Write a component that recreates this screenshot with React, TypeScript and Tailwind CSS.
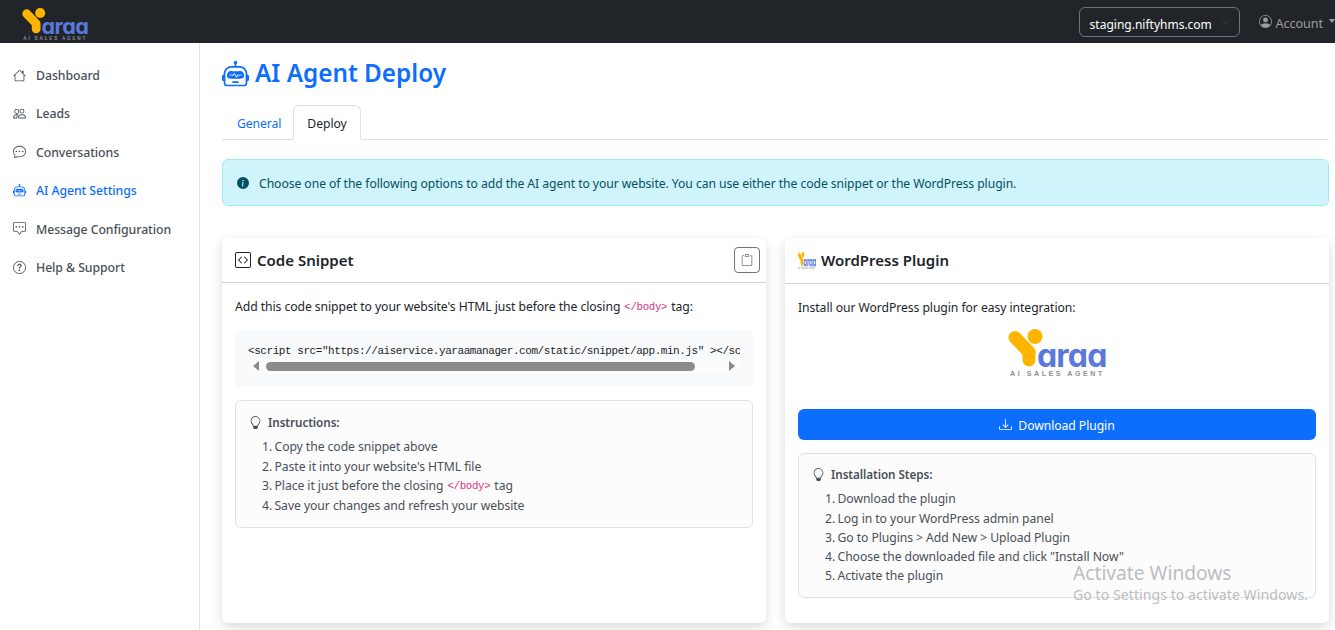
import React from "react";
import { BsHouse, BsPeople, BsChatDots, BsChatSquareDots, BsQuestionCircle, BsRobot, BsInfoCircleFill, BsCodeSquare, BsClipboard, BsLightbulb, BsDownload, BsPersonCircle, BsChevronDown } from "react-icons/bs";

function Logo({ className, stretch }: { className: string; stretch?: boolean }) {
  return (
    <svg viewBox="0 0 98 49" className={className} preserveAspectRatio={stretch ? "none" : "xMidYMid meet"}>
      <path d="M7 8.5 L21 23 V31" fill="none" stroke="#ffb400" strokeWidth="13" strokeLinecap="round" strokeLinejoin="round" />
      <circle cx="27" cy="7.5" r="7.5" fill="#ffb400" />
      <text x="29" y="38" fontFamily="Inter, sans-serif" fontWeight="700" fontSize="32" letterSpacing="-0.8" fill="#5b78dc" className="[font-feature-settings:'cv11']">araa</text>
      <text x="2" y="47" fontFamily="'Liberation Sans', sans-serif" fontWeight="700" fontSize="7" letterSpacing="2.6" fill="#8a8f96">AI SALES AGENT</text>
    </svg>
  );
}

function NavItem({ icon, label, active }: { icon: React.ReactNode; label: string; active?: boolean }) {
  return (
    <div className={`flex h-[38.4px] items-center pl-[13px] ${active ? "text-[#0d6efd]" : "text-[#495057]"}`}>
      <span className="flex w-[23px] items-center text-[13px]">{icon}</span>
      <span className="mt-[2px] text-[12.3px] font-medium tracking-[-0.07px]">{label}</span>
    </div>
  );
}

function CodeTag() {
  return <code className="font-['Liberation_Mono',monospace] text-[10.8px] tracking-[-0.35px] text-[#d63384]">&lt;/body&gt;</code>;
}

function Row({ n, children, h }: { n: number; children: React.ReactNode; h?: string }) {
  return (
    <li className={`flex items-center ${h ?? "h-[19.2px]"}`}>
      <span className="w-[12.5px]">{n}.</span>
      <span>{children}</span>
    </li>
  );
}

export default function App() {
  return (
    <div className="h-[630px] w-[1335px] overflow-hidden bg-white font-['Noto_Sans','Open_Sans',sans-serif] text-[12.2px] tracking-[-0.07px] text-[#212529] relative">
      <header className="flex h-[43px] items-center bg-[#212529] pl-[22px] pr-0">
        <Logo className="mt-[5px] h-[33px] w-[66px]" />
        <div className="ml-auto flex h-[30px] w-[161px] items-center rounded-[6px] border border-[#6c757d] pl-[10px] text-[12px] tracking-normal text-white">
          <span className="mt-[6px]">staging.niftyhms.com</span>
          <BsChevronDown className="ml-[9px] text-[10px] text-[#40464c]" />
        </div>
        <div className="ml-[19px] flex items-center text-[12.6px] text-[#9a9da0]">
          <BsPersonCircle className="mr-[4px] text-[13px]" />
          <span className="mt-[5px]">Account</span>
          <span className="ml-[6px] h-0 w-0 border-x-[3.5px] border-t-[4px] border-x-transparent border-t-[#9a9da0]" />
        </div>
      </header>
      <div className="flex h-[587px]">
        <aside className="w-[200px] shrink-0 border-r border-[#dee2e6] pt-[13px]">
          <NavItem icon={<BsHouse />} label="Dashboard" />
          <NavItem icon={<BsPeople />} label="Leads" />
          <NavItem icon={<BsChatDots />} label="Conversations" />
          <NavItem icon={<BsRobot />} label="AI Agent Settings" active />
          <NavItem icon={<BsChatSquareDots />} label="Message Configuration" />
          <NavItem icon={<BsQuestionCircle />} label="Help & Support" />
        </aside>
        <main className="min-w-0 flex-1 pl-[22px] pr-[6px]">
          <h1 className="flex h-[62px] items-center gap-[6px] text-[24.3px] font-semibold tracking-normal text-[#0d6efd]">
            <BsRobot className="text-[27px]" />
            <span className="mb-[2px]">AI Agent Deploy</span>
          </h1>
          <div className="flex h-[35px] border-b border-[#dee2e6]">
            <div className="flex h-[34px] w-[71px] items-center pl-[15px] text-[#0d6efd]"><span className="mt-[5px]">General</span></div>
            <div className="flex h-[35px] w-[68px] items-center justify-center rounded-t-[6px] border border-b-white border-[#dee2e6] bg-white text-[#212529]"><span className="mt-[3px]">Deploy</span></div>
          </div>
          <div className="mt-[19px] flex h-[47px] items-center gap-[10px] rounded-[6px] border border-[#9eeaf9] bg-[#cff4fc] pl-[14px] text-[#055160]">
            <BsInfoCircleFill className="text-[12px]" />
            <span className="mt-[3px]">Choose one of the following options to add the AI agent to your website. You can use either the code snippet or the WordPress plugin.</span>
          </div>
          <div className="mt-[32px] grid h-[385px] grid-cols-[544px_544px] gap-[19px]">
            <section className="flex flex-col rounded-[6px] bg-white shadow-[0_4px_12px_rgba(0,0,0,0.15)]">
              <div className="flex h-[45px] items-center border-b border-[#d3d4d5] pl-[13px] pr-[6px]">
                <BsCodeSquare className="mr-[6px] text-[16px] text-[#212529]" />
                <span className="text-[15px] font-semibold tracking-normal">Code Snippet</span>
                <div className="ml-auto flex h-[26px] w-[26px] items-center justify-center rounded-[4px] border border-[#6c757d] text-[#6c757d]">
                  <BsClipboard className="text-[12px]" />
                </div>
              </div>
              <div className="px-[13px]">
                <p className="mt-[15px] flex h-[19px] items-center gap-[4px]">
                  Add this code snippet to your website's HTML just before the closing <CodeTag /> tag:
                </p>
                <div className="mt-[13px] h-[57px] rounded-[6px] bg-[#f8f9fa] px-[13px] pt-[13px]">
                  <div className="h-[16px] overflow-hidden whitespace-nowrap pt-[1px] font-['Liberation_Mono',monospace] text-[11px] leading-[15px] tracking-[-0.44px]">
                    &lt;script src="https://aiservice.yaraamanager.com/static/snippet/app.min.js" &gt;&lt;/sc
                  </div>
                  <div className="flex h-[14px] items-center justify-between bg-[#fbfbfc] px-[5px]">
                    <span className="h-0 w-0 border-y-[5px] border-r-[6px] border-y-transparent border-r-[#8b8b8b]" />
                    <span className="ml-[7px] mr-[34px] h-[9px] flex-1 rounded-full bg-[#8b8b8b]" />
                    <span className="h-0 w-0 border-y-[5px] border-l-[6px] border-y-transparent border-l-[#8b8b8b]" />
                  </div>
                </div>
                <div className="mt-[13px] h-[128px] rounded-[6px] border border-[#dee2e6] bg-[#fcfcfd] px-[13px] pt-[12px]">
                  <div className="flex h-[19px] items-center text-[11.7px] font-semibold text-[#495057]">
                    <BsLightbulb className="mr-[6px] text-[13px]" />
                    <span className="mt-[1px]">Instructions:</span>
                  </div>
                  <ol className="ml-[13px] mt-[6px] text-[#495057]">
                    <Row n={1}>Copy the code snippet above</Row>
                    <Row n={2}>Paste it into your website's HTML file</Row>
                    <Row n={3}><span className="flex items-center gap-[4px]">Place it just before the closing <CodeTag /> tag</span></Row>
                    <Row n={4} h="h-[21px]">Save your changes and refresh your website</Row>
                  </ol>
                </div>
              </div>
            </section>
            <section className="flex flex-col rounded-[6px] bg-white shadow-[0_4px_12px_rgba(0,0,0,0.15)]">
              <div className="flex h-[46px] items-center border-b border-[#d3d4d5] pl-[13px]">
                <Logo className="mr-[5px] h-[18px] w-[18px]" stretch />
                <span className="text-[15px] font-semibold tracking-normal">WordPress Plugin</span>
              </div>
              <div className="px-[13px]">
                <p className="mt-[15px] flex h-[19px] items-center">Install our WordPress plugin for easy integration:</p>
                <div className="mt-[11px] flex h-[49px] justify-center">
                  <Logo className="h-[49px] w-[98px]" />
                </div>
                <div className="mt-[31px] flex h-[31px] items-center justify-center gap-[6px] rounded-[6px] bg-[#0d6efd] text-white">
                  <BsDownload className="text-[13px]" />
                  <span className="mt-[3px]">Download Plugin</span>
                </div>
                <div className="mt-[13px] h-[145px] rounded-[6px] border border-[#dee2e6] bg-[#fcfcfd] px-[13px] pt-[11px]">
                  <div className="flex h-[19px] items-center text-[11.7px] font-semibold text-[#495057]">
                    <BsLightbulb className="mr-[6px] text-[13px]" />
                    <span>Installation Steps:</span>
                  </div>
                  <ol className="ml-[13px] mt-[5px] pt-[1px] text-[#495057]">
                    <Row n={1}>Download the plugin</Row>
                    <Row n={2}>Log in to your WordPress admin panel</Row>
                    <Row n={3}>Go to Plugins &gt; Add New &gt; Upload Plugin</Row>
                    <Row n={4}>Choose the downloaded file and click "Install Now"</Row>
                    <Row n={5}>Activate the plugin</Row>
                  </ol>
                </div>
              </div>
            </section>
          </div>
        </main>
      </div>
      <div className="pointer-events-none absolute left-[1073px] top-[560px] tracking-normal text-[#b5b5b5]/90">
        <div className="text-[19.2px] leading-[25px]">Activate Windows</div>
        <div className="whitespace-nowrap text-[14.2px] leading-[19px]">Go to Settings to activate Windows.</div>
      </div>
    </div>
  );
}
